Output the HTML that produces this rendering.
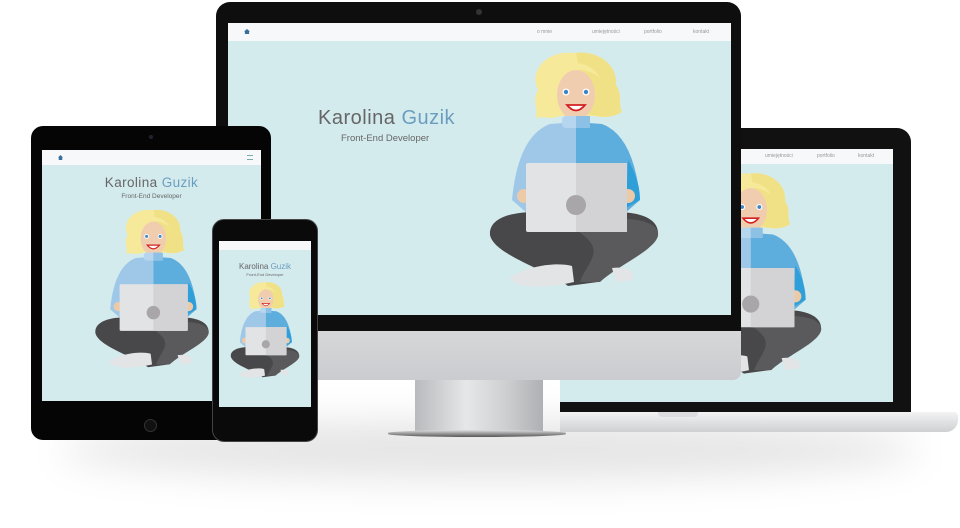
<!DOCTYPE html>
<html><head><meta charset="utf-8"><style>
*{margin:0;padding:0;box-sizing:border-box}
body{width:960px;height:528px;background:#fff;position:relative;overflow:hidden;font-family:"Liberation Sans",sans-serif}
.a{position:absolute}
.scr{background:#d4ebee;overflow:hidden}
.nav{position:absolute;left:0;top:0;right:0;background:#f6f8f9}
.t{position:absolute;color:#666;white-space:nowrap;font-weight:300;text-align:center}
.t b{color:#6b9dbf;font-weight:300}
svg.fig{position:absolute}
</style></head><body>
<svg width="0" height="0" style="position:absolute">
<defs>
<g id="girl">
<path d="M50,40 C40,20 60,0 85,3 C110,0 130,15 128,35 C135,45 130,55 134,62 C120,70 110,66 104,66 L72,66 C64,70 55,66 48,68 C50,58 44,50 50,40Z" fill="#f6e99a"/>
<path d="M88,3 C110,0 130,15 128,35 C135,45 130,55 134,62 C120,70 110,66 100,64 Z" fill="#f0e186"/>
<ellipse cx="88" cy="45" rx="19" ry="25" fill="#f1cdb0"/>
<path d="M60,30 C62,10 100,5 112,28 C100,18 80,16 66,26Z" fill="#f6e99a"/>
<circle cx="78" cy="42" r="3.5" fill="#fff"/><circle cx="98" cy="42" r="3.5" fill="#fff"/>
<circle cx="78" cy="42" r="2.2" fill="#3b86c5"/><circle cx="98" cy="42" r="2.2" fill="#3b86c5"/>
<path d="M79,55 Q88,66 97,55Z" fill="#fff" stroke="#d42020" stroke-width="1.8"/>
<path d="M88,72 L62,74 Q30,86 24,150 L40,164 L88,164Z" fill="#9fc8e8"/>
<path d="M88,72 L114,74 Q146,86 152,150 L136,164 L88,164Z" fill="#5eaedd"/>
<path d="M140,110 Q152,130 152,150 L138,158Z" fill="#2f9fd9"/>
<rect x="74" y="66" width="28" height="12" rx="4" fill="#b5d6ee"/>
<rect x="88" y="66" width="14" height="12" fill="#8cc0e5"/>
<circle cx="36" cy="146" r="7" fill="#eccaa8"/><circle cx="140" cy="146" r="7" fill="#eccaa8"/>
<path d="M2,185 C0,160 50,158 88,166 C126,158 172,160 170,185 C168,200 130,210 110,232 L80,236 C60,220 6,205 2,185Z" fill="#48484a"/>
<path d="M88,180 C126,162 172,168 170,185 C168,200 130,215 112,232 L92,232 C100,210 120,200 88,180Z" fill="#5a5a5c"/>
<path d="M22,228 C40,215 70,212 84,216 L86,232 C60,238 30,240 22,228Z" fill="#e2e4e6"/>
<path d="M124,218 C140,216 148,222 144,230 L128,232Z" fill="#e2e4e6"/>
<rect x="38" y="113" width="101" height="69" rx="2" fill="#e2e3e5"/>
<rect x="88" y="113" width="51" height="69" fill="#d3d3d5"/>
<circle cx="88" cy="155" r="10" fill="#a8a6a8"/>
</g>
</defs></svg>

<!-- floor shadow -->
<div class="a" style="left:60px;top:420px;width:860px;height:60px;border-radius:50%;background:rgba(0,0,0,.10);filter:blur(18px)"></div>

<!-- Laptop -->
<div class="a" style="left:560px;top:128px;width:351px;height:286px;background:#111;border-radius:0 14px 0 0"></div>
<div class="a scr" style="left:560px;top:149px;width:333px;height:253px">
 <div class="nav" style="height:15px"></div>
 <div class="t" style="left:205px;top:4px;font-size:5px;color:#999">umiejętności</div>
 <div class="t" style="left:257px;top:4px;font-size:5px;color:#999">portfolio</div>
 <div class="t" style="left:298px;top:4px;font-size:5px;color:#999">kontakt</div>
 <svg class="fig" style="left:115px;top:22px" width="148" height="206" viewBox="0 0 172 240"><use href="#girl"/></svg>
</div>
<div class="a" style="left:560px;top:412px;width:398px;height:20px;background:linear-gradient(#f3f3f4,#cfd0d2);border-radius:0 4px 12px 0"></div>
<div class="a" style="left:658px;top:412px;width:40px;height:5px;background:#dcdcde;border-radius:0 0 4px 4px"></div>

<!-- iMac stand -->
<div class="a" style="left:415px;top:378px;width:128px;height:56px;background:linear-gradient(90deg,#b9babd,#e6e7e9 40%,#cfd0d2 70%,#aeb0b3);clip-path:polygon(0 0,100% 0,104% 100%,-4% 100%)"></div>
<div class="a" style="left:388px;top:430px;width:178px;height:7px;background:linear-gradient(#dfe0e2,#555);border-radius:50%/3px"></div>
<!-- iMac -->
<div class="a" style="left:216px;top:2px;width:525px;height:330px;background:#0e0e0f;border-radius:14px 14px 0 0"></div>
<div class="a" style="left:216px;top:331px;width:525px;height:49px;background:linear-gradient(#d6d7d9,#cbcccf);border-radius:0 0 8px 8px"></div>
<div class="a" style="left:476px;top:9px;width:6px;height:6px;border-radius:50%;background:#333"></div>
<div class="a scr" style="left:228px;top:23px;width:503px;height:292px">
 <div class="nav" style="height:18px"></div>
 <div class="a" style="left:16px;top:6px;width:6px;height:5px;background:#3a6f9a;clip-path:polygon(50% 0,100% 50%,85% 50%,85% 100%,15% 100%,15% 50%,0 50%)"></div>
 <div class="t" style="left:309px;top:6px;font-size:5px;color:#999">o mnie</div>
 <div class="t" style="left:364px;top:6px;font-size:5px;color:#999">umiejętności</div>
 <div class="t" style="left:416px;top:6px;font-size:5px;color:#999">portfolio</div>
 <div class="t" style="left:465px;top:6px;font-size:5px;color:#999">kontakt</div>
 <div class="t" style="left:90px;top:84px;font-size:20px;letter-spacing:.5px">Karolina <b>Guzik</b></div>
 <div class="t" style="left:113px;top:110px;font-size:9.5px">Front-End Developer</div>
 <svg class="fig" style="left:260px;top:27px" width="172" height="240" viewBox="0 0 172 240"><use href="#girl"/></svg>
</div>

<!-- Tablet -->
<div class="a" style="left:31px;top:126px;width:240px;height:314px;background:#050505;border-radius:12px"></div>
<div class="a" style="left:149px;top:135px;width:4px;height:4px;border-radius:50%;background:#223"></div>
<div class="a" style="left:144px;top:419px;width:13px;height:13px;border-radius:50%;background:#111;border:1px solid #333"></div>
<div class="a scr" style="left:42px;top:150px;width:219px;height:251px">
 <div class="nav" style="height:15px"></div>
 <div class="a" style="left:16px;top:5px;width:5px;height:5px;background:#3a6f9a;clip-path:polygon(50% 0,100% 50%,85% 50%,85% 100%,15% 100%,15% 50%,0 50%)"></div>
 <div class="a" style="left:205px;top:5px;width:6px;height:5px;border-top:1px solid #7aa;border-bottom:1px solid #7aa"></div>
 <div class="t" style="left:0;width:219px;top:25px;font-size:13.5px;letter-spacing:.4px">Karolina <b>Guzik</b></div>
 <div class="t" style="left:0;width:219px;top:43px;font-size:6.5px">Front-End Developer</div>
 <svg class="fig" style="left:52px;top:58px" width="116" height="162" viewBox="0 0 172 240"><use href="#girl"/></svg>
</div>

<!-- Phone -->
<div class="a" style="left:212px;top:219px;width:106px;height:223px;background:#0a0a0a;border-radius:12px;border:1px solid #444"></div>
<div class="a scr" style="left:219px;top:241px;width:92px;height:166px">
 <div class="nav" style="height:9px"></div>
 <div class="t" style="left:0;width:92px;top:21px;font-size:8px">Karolina <b>Guzik</b></div>
 <div class="t" style="left:0;width:92px;top:31px;font-size:4px">Front-End Developer</div>
 <svg class="fig" style="left:11px;top:40px" width="70" height="98" viewBox="0 0 172 240"><use href="#girl"/></svg>
</div>
</body></html>
